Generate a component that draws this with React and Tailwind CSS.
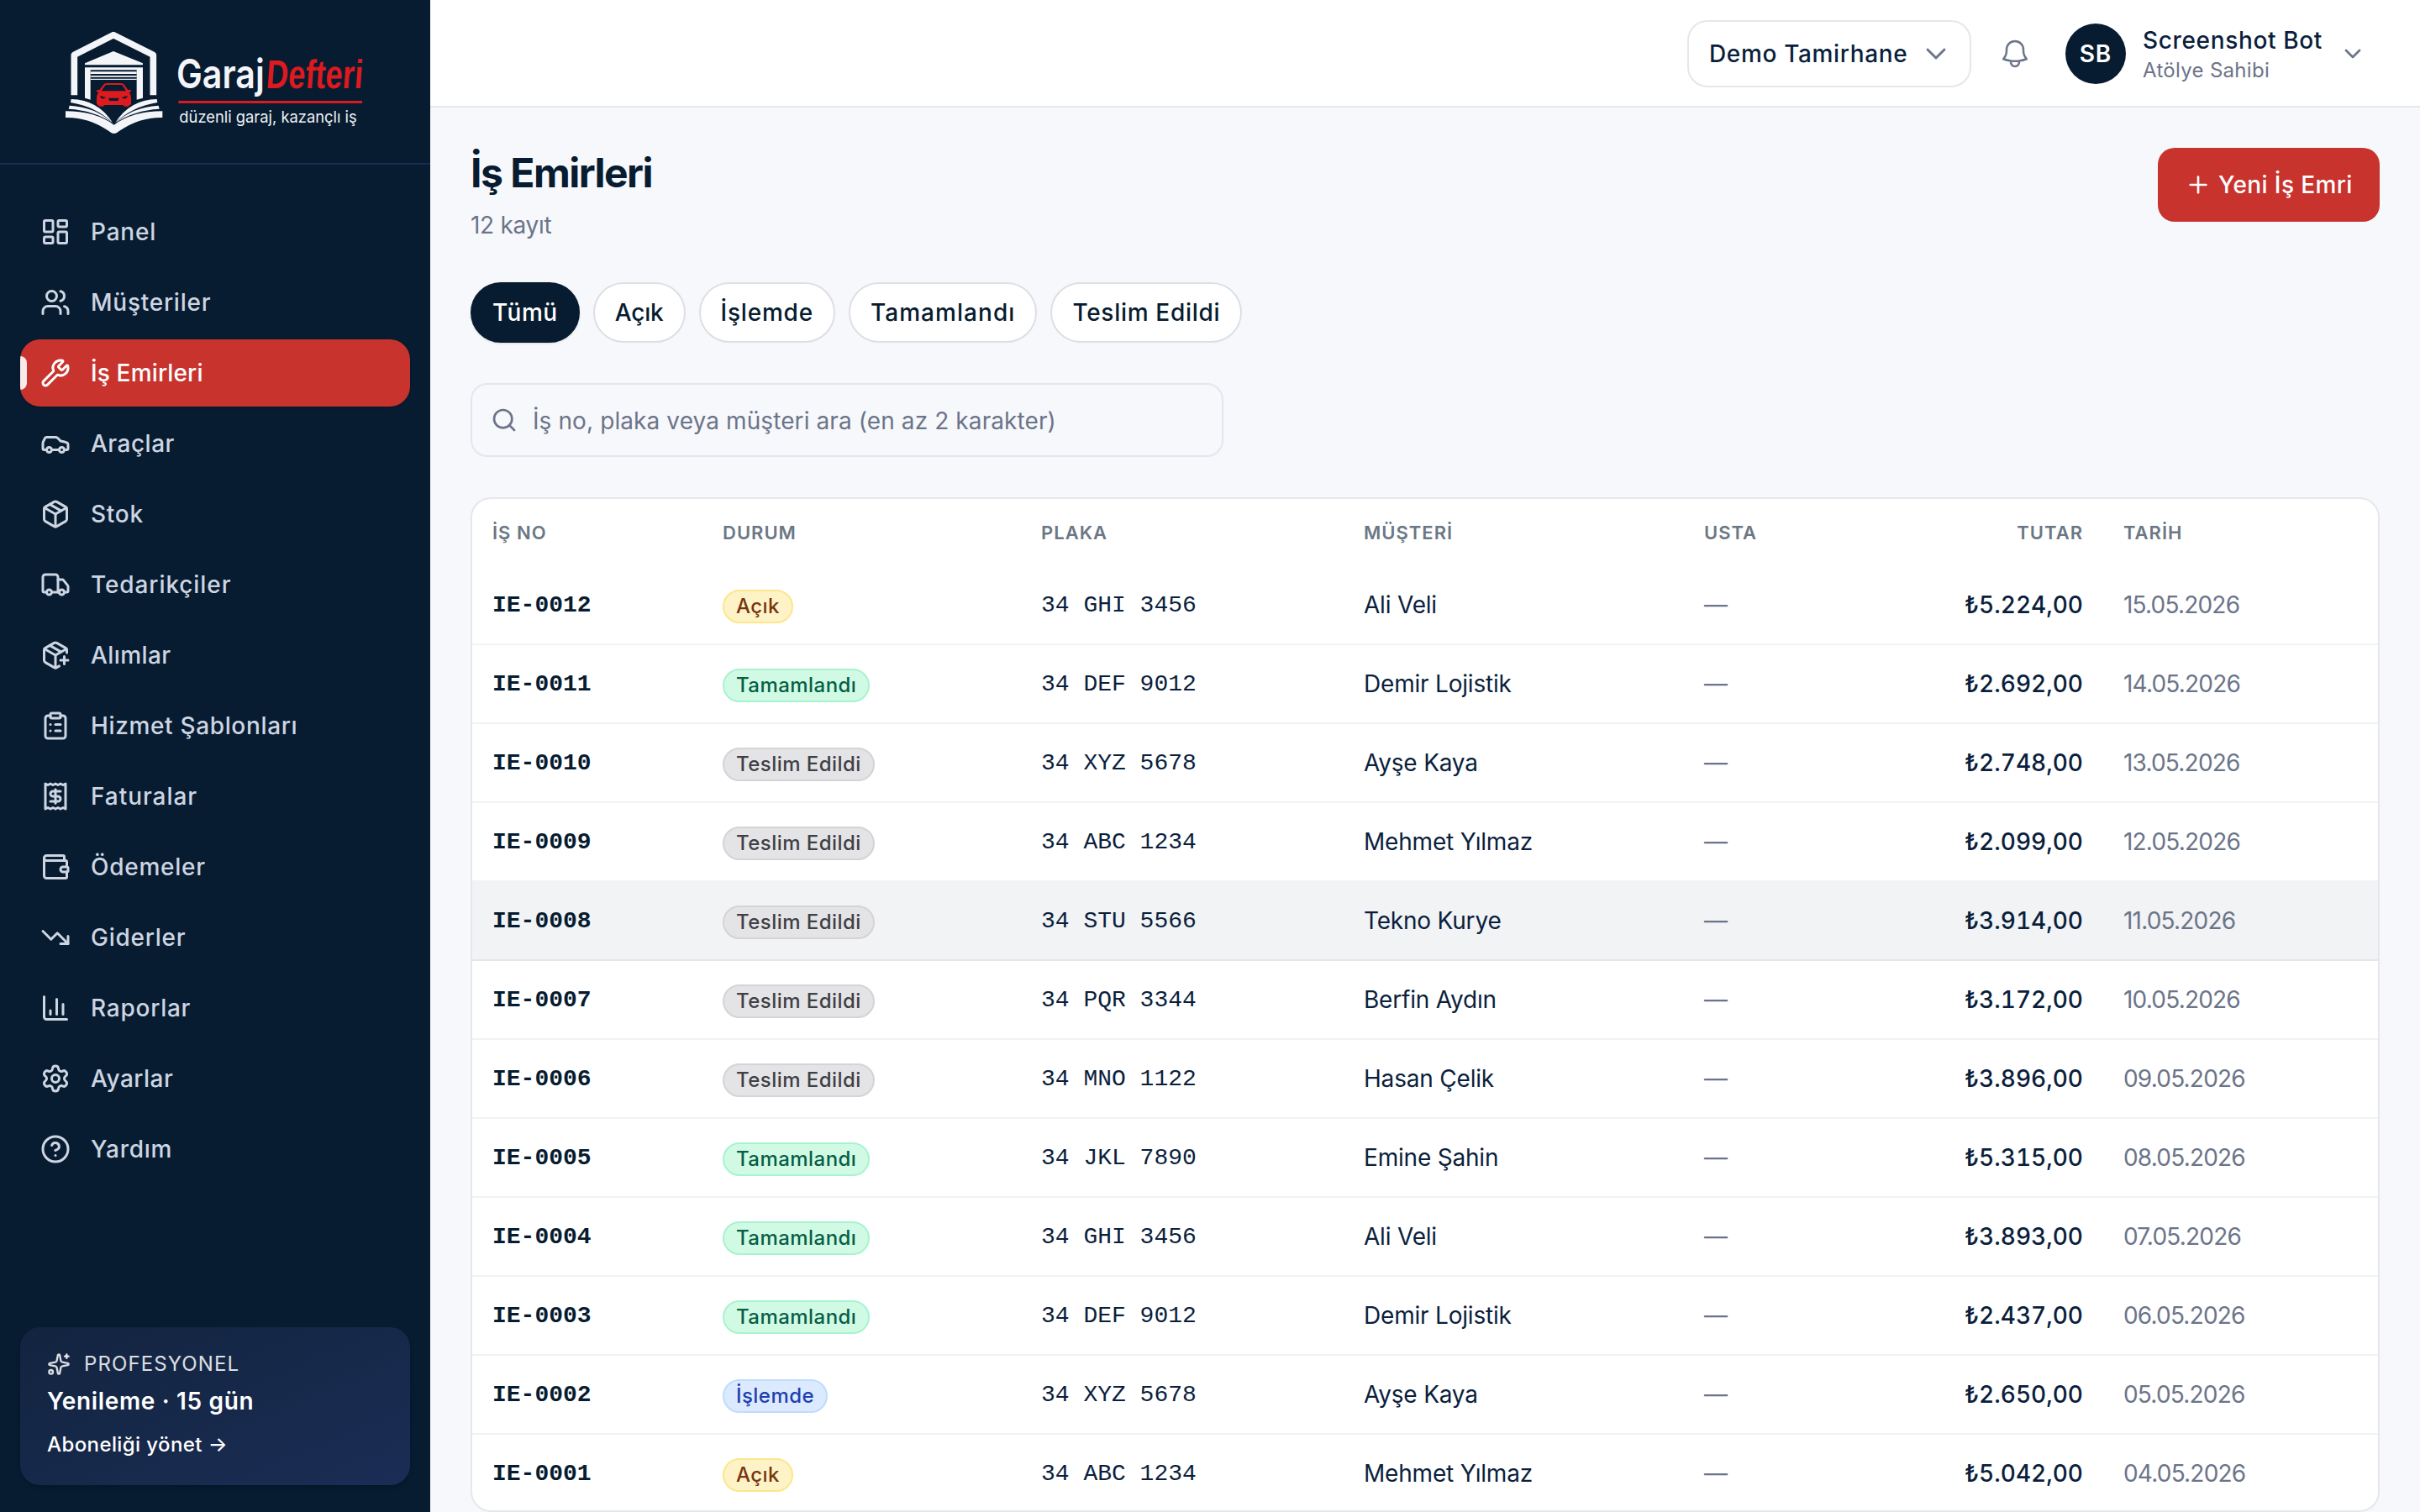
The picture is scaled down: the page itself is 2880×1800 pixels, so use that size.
import * as React from "react"
import {
  Car,
  ChartColumn,
  ChevronDown,
  CircleHelp,
  ClipboardList,
  LayoutDashboard,
  Package,
  PackagePlus,
  Plus,
  Receipt,
  Search,
  Settings,
  Sparkles,
  TrendingDown,
  Truck,
  Users,
  Wallet,
  Wrench,
} from "lucide-react"
import clsx from "clsx"

const NAV_ITEMS = [
  { label: "Panel", icon: LayoutDashboard, tracking: "tracking-[0.8px]" },
  { label: "Müşteriler", icon: Users, tracking: "tracking-[0.75px]" },
  { label: "İş Emirleri", icon: Wrench, active: true, tracking: "tracking-[0.15px]" },
  { label: "Araçlar", icon: Car, tracking: "tracking-[0.5px]" },
  { label: "Stok", icon: Package, tracking: "tracking-[0.75px]" },
  { label: "Tedarikçiler", icon: Truck, tracking: "tracking-[0.9px]" },
  { label: "Alımlar", icon: PackagePlus, tracking: "tracking-[0.4px]" },
  { label: "Hizmet Şablonları", icon: ClipboardList, tracking: "tracking-[0.65px]" },
  { label: "Faturalar", icon: Receipt, tracking: "tracking-[0.95px]" },
  { label: "Ödemeler", icon: Wallet, tracking: "tracking-[0.75px]" },
  { label: "Giderler", icon: TrendingDown, tracking: "tracking-[0.75px]" },
  { label: "Raporlar", icon: ChartColumn, tracking: "tracking-[0.75px]" },
  { label: "Ayarlar", icon: Settings, tracking: "tracking-[0.5px]" },
  { label: "Yardım", icon: CircleHelp, tracking: "tracking-[0.75px]" },
]

const FILTERS = [
  { label: "Tümü", active: true, tracking: "tracking-[0.6px]" },
  { label: "Açık", tracking: "tracking-[-0.2px]" },
  { label: "İşlemde", tracking: "tracking-[0.8px]" },
  { label: "Tamamlandı", tracking: "tracking-[1.05px]" },
  { label: "Teslim Edildi", tracking: "tracking-[0.7px]" },
]

const STATUS_STYLES = {
  "Açık": "bg-[#fef3c7] border-[#fde68a] text-[#78350f]",
  "Tamamlandı": "bg-[#d1fae5] border-[#a7f3d0] text-[#065f46]",
  "Teslim Edildi": "bg-[#e4e4e7] border-[#d4d4d8] text-[#3f3f46]",
  "İşlemde": "bg-[#dbeafe] border-[#bfdbfe] text-[#1e40af]",
}

const ORDERS = [
  { no: "IE-0012", status: "Açık", plate: "34 GHI 3456", customer: "Ali Veli", total: "₺5.224,00", date: "15.05.2026" },
  { no: "IE-0011", status: "Tamamlandı", plate: "34 DEF 9012", customer: "Demir Lojistik", total: "₺2.692,00", date: "14.05.2026" },
  { no: "IE-0010", status: "Teslim Edildi", plate: "34 XYZ 5678", customer: "Ayşe Kaya", total: "₺2.748,00", date: "13.05.2026" },
  { no: "IE-0009", status: "Teslim Edildi", plate: "34 ABC 1234", customer: "Mehmet Yılmaz", total: "₺2.099,00", date: "12.05.2026" },
  { no: "IE-0008", status: "Teslim Edildi", plate: "34 STU 5566", customer: "Tekno Kurye", total: "₺3.914,00", date: "11.05.2026", highlighted: true },
  { no: "IE-0007", status: "Teslim Edildi", plate: "34 PQR 3344", customer: "Berfin Aydın", total: "₺3.172,00", date: "10.05.2026" },
  { no: "IE-0006", status: "Teslim Edildi", plate: "34 MNO 1122", customer: "Hasan Çelik", total: "₺3.896,00", date: "09.05.2026" },
  { no: "IE-0005", status: "Tamamlandı", plate: "34 JKL 7890", customer: "Emine Şahin", total: "₺5.315,00", date: "08.05.2026" },
  { no: "IE-0004", status: "Tamamlandı", plate: "34 GHI 3456", customer: "Ali Veli", total: "₺3.893,00", date: "07.05.2026" },
  { no: "IE-0003", status: "Tamamlandı", plate: "34 DEF 9012", customer: "Demir Lojistik", total: "₺2.437,00", date: "06.05.2026" },
  { no: "IE-0002", status: "İşlemde", plate: "34 XYZ 5678", customer: "Ayşe Kaya", total: "₺2.650,00", date: "05.05.2026" },
  { no: "IE-0001", status: "Açık", plate: "34 ABC 1234", customer: "Mehmet Yılmaz", total: "₺5.042,00", date: "04.05.2026" },
]

function Logo() {
  return (
    <svg viewBox="168 51 1200 480" className="h-[160px] w-[400px] overflow-visible" aria-label="GarajDefteri">
      {/* garage */}
      <g fill="#f4f5f9">
        <path d="M265 340V196L405 125L547 196V340" fill="none" stroke="#f4f5f9" strokeWidth="23" strokeLinejoin="round" />
        <path d="M303 232V226L405 183L510 226V232Z" />
        <path d="M303 241H510V350L488 356V250H323V356L303 350Z" />
        <path d="M323 256H488V264H323ZM323 270H488V275H323ZM323 281H488V285H323Z" />
      </g>
      {/* car */}
      <g fill="#dc1a1f">
        <path
          fillRule="evenodd"
          d="M345 322L356 320L369 303Q372 297 380 297H432Q440 297 444 303L456 320L468 322L467 329L461 329Q468 338 468 350V370Q468 374 464 375L457 380H444L440 375H373L369 380H356L349 375Q345 372 345 368V350Q345 338 352 329L346 329ZM362 325H450L438 306Q436 303 431 303H381Q377 303 375 306Z"
        />
        <path d="M357 342L377 348Q374 353 366 352Q358 351 357 342ZM455 342L435 348Q438 353 446 352Q454 351 455 342ZM387 350H425L421 360H391Z" fill="#071c30" />
      </g>
      {/* open book */}
      <g fill="#f4f5f9">
        <path d="M234 397Q340 397 407 446Q474 397 580 397V420Q500 418 429 466L416 475Q407 479 398 475L385 466Q314 418 234 420Z" />
        <path d="M254 354Q350 356 402 438Q340 380 252 366Z" />
        <path d="M248 377Q340 382 400 438Q335 394 245 389Z" />
        <path d="M560 354Q464 356 412 438Q474 380 562 366Z" />
        <path d="M566 377Q474 382 414 438Q479 394 569 389Z" />
      </g>
      <text x="630" y="316" textLength="314" lengthAdjust="spacingAndGlyphs" fill="#f4f5f9" className="font-['Inter',sans-serif] text-[144px] font-semibold">
        Garaj
      </text>
      <text transform="translate(948 316) skewX(-4)" textLength="345" lengthAdjust="spacingAndGlyphs" fill="#dc1a1f" className="font-['Liberation_Sans',sans-serif] text-[144px] font-bold">
        Defteri
      </text>
      <path d="M637 360H1293V369H637Z" fill="#dc1a1f" />
      <text x="640" y="438" textLength="634" lengthAdjust="spacingAndGlyphs" fill="#eef1f6" className="font-['Inter',sans-serif] text-[57px]">
        düzenli garaj, kazançlı iş
      </text>
    </svg>
  )
}

function BellIcon({ className }) {
  return (
    <svg viewBox="0 0 24 24" fill="none" stroke="currentColor" strokeWidth="1.5" strokeLinecap="round" strokeLinejoin="round" className={className}>
      <path d="M14.857 17.082a23.848 23.848 0 0 0 5.454-1.31A8.967 8.967 0 0 1 18 9.75V9A6 6 0 0 0 6 9v.75a8.967 8.967 0 0 1-2.312 6.022c1.733.64 3.56 1.085 5.455 1.31m5.714 0a24.255 24.255 0 0 1-5.714 0m5.714 0a3 3 0 1 1-5.714 0" />
    </svg>
  )
}

function Sidebar() {
  return (
    <aside className="flex w-[512px] shrink-0 flex-col bg-[#071c30]">
      <div className="flex h-[196px] shrink-0 items-center justify-center border-b-2 border-[#1a2c52]">
        <Logo />
      </div>

      <nav className="flex flex-1 flex-col gap-1 px-6 py-10">
        {NAV_ITEMS.map(({ label, icon: Icon, active, tracking }) => (
          <a
            key={label}
            className={clsx(
              "relative flex h-20 items-center gap-6 overflow-hidden rounded-3xl px-6 text-[28px] font-medium",
              tracking,
              active ? "bg-[#c8332e] text-white shadow-sm" : "text-[#cdd5e2]"
            )}
          >
            {active && <span className="absolute left-0 h-10 w-2 rounded-r-lg bg-white/90" />}
            <Icon className="size-9 shrink-0" strokeWidth={2} />
            {label}
          </a>
        ))}
      </nav>

      <div className="mx-6 mb-8 h-[188px] rounded-3xl bg-linear-to-br from-[#12243f] to-[#1b2d55] px-8 pt-7 text-white shadow-md">
        <div className="flex h-8 items-center gap-4 text-2xl tracking-[1.1px] text-white/85">
          <Sparkles className="size-7" strokeWidth={2} />
          PROFESYONEL
        </div>
        <p className="mt-2 text-[28px] leading-10 font-semibold tracking-[0.65px]">Yenileme · 15 gün</p>
        <a className="mt-4 block text-2xl leading-8 font-medium tracking-[0.4px]">Aboneliği yönet →</a>
      </div>
    </aside>
  )
}

function Topbar() {
  return (
    <header className="flex h-32 shrink-0 items-center justify-end border-b-2 border-[#e4e7ec] bg-white pt-0.5 pr-16">
      <button className="flex h-20 w-[338px] items-center justify-between rounded-3xl border-2 border-[#e4e7ec] pr-5 pl-6 text-[28px] font-medium tracking-[0.65px] text-[#0b1f3d]">
        Demo Tamirhane
        <ChevronDown className="size-10 text-[#6b7489]" strokeWidth={1.75} />
      </button>
      <BellIcon className="ml-8 size-10 text-[#6b7489]" />
      <div className="ml-10 flex size-[72px] items-center justify-center rounded-full bg-[#071c30] text-[28px] font-semibold tracking-[1px] text-white">
        SB
      </div>
      <div className="ml-5 w-[214px] whitespace-nowrap">
        <p className="text-[28px] leading-10 font-medium tracking-[0.65px] text-[#0b1f3d]">Screenshot Bot</p>
        <p className="text-2xl leading-8 tracking-[0.3px] text-[#6b7489]">Atölye Sahibi</p>
      </div>
      <ChevronDown className="ml-5 size-8 text-[#6b7489]" strokeWidth={2} />
    </header>
  )
}

function StatusBadge({ status }) {
  return (
    <span
      className={clsx(
        "flex h-10 w-fit items-center rounded-full border-2 px-3.5 text-2xl font-medium tracking-[0.45px]",
        STATUS_STYLES[status]
      )}
    >
      {status}
    </span>
  )
}

function OrdersTable() {
  return (
    <div className="overflow-hidden rounded-3xl border-2 border-[#e5e7ea] bg-white">
      <table className="w-full table-fixed border-separate border-spacing-0 text-left text-[28px] text-[#0b1f3d]">
        <colgroup>
          <col className="w-[274px]" />
          <col className="w-[379px]" />
          <col className="w-[384px]" />
          <col className="w-[405px]" />
          <col className="w-[199px]" />
          <col className="w-[300px]" />
          <col />
        </colgroup>
        <thead>
          <tr className="h-20 text-[22px] tracking-[1px] text-[#6b7785] [&>th]:px-6 [&>th]:py-0 [&>th]:font-semibold">
            <th>İŞ NO</th>
            <th>DURUM</th>
            <th>PLAKA</th>
            <th>MÜŞTERİ</th>
            <th>USTA</th>
            <th className="text-right">TUTAR</th>
            <th>TARİH</th>
          </tr>
        </thead>
        <tbody>
          {ORDERS.map((order) => (
            <tr
              key={order.no}
              className={clsx(
                "h-[94px] last:h-[92px] [&>td]:border-b-2 [&>td]:px-6 last:[&>td]:border-b-0",
                order.highlighted ? "bg-[#f1f3f5] [&>td]:border-[#e3e5e8]" : "[&>td]:border-[#f1f2f4]"
              )}
            >
              <td className="pt-0.5 font-['Liberation_Mono',monospace] font-bold text-[#071c30]">{order.no}</td>
              <td className="pt-1">
                <StatusBadge status={order.status} />
              </td>
              <td className="pt-0.5 font-['Liberation_Mono',monospace]">{order.plate}</td>
              <td className="tracking-[-0.2px]">{order.customer}</td>
              <td className="text-[#6b7489]">—</td>
              <td className="text-right font-medium tabular-nums">{order.total}</td>
              <td className="tracking-[-0.8px] text-[#6b7489]">{order.date}</td>
            </tr>
          ))}
        </tbody>
      </table>
    </div>
  )
}

export default function App() {
  return (
    <div className="flex h-screen w-screen overflow-hidden bg-[#f7f8fc] font-['Inter',sans-serif] text-[#0b1f3d]">
      <Sidebar />
      <div className="flex min-w-0 flex-1 flex-col">
        <Topbar />
        <main className="flex flex-1 flex-col gap-12 overflow-hidden px-12 pt-12">
          <div className="flex items-start justify-between">
            <div>
              <h1 className="text-[48px] leading-[60px] font-bold tracking-[-1.5px] text-[#071c30]">İş Emirleri</h1>
              <p className="mt-3 text-[28px] leading-10 tracking-[-0.3px] text-[#6b7489]">12 kayıt</p>
            </div>
            <button className="flex h-[88px] w-[264px] items-center gap-2 rounded-[20px] bg-[#c8332e] pl-8 text-[28px] font-medium tracking-[0.4px] whitespace-nowrap text-white">
              <Plus className="size-8" strokeWidth={2} />
              Yeni İş Emri
            </button>
          </div>

          <div className="flex gap-4">
            {FILTERS.map(({ label, active, tracking }) => (
              <button
                key={label}
                className={clsx(
                  "h-[72px] rounded-full border-2 px-6 text-[28px] font-medium",
                  tracking,
                  active ? "border-[#071c30] bg-[#071c30] text-white shadow-sm" : "border-[#dcdfe4] bg-white text-[#071c30]"
                )}
              >
                {label}
              </button>
            ))}
          </div>

          <div className="flex h-[88px] w-[896px] shrink-0 items-center gap-[18px] rounded-[20px] border-2 border-[#e4e6ed] px-[22px] text-[28px] tracking-[0.1px] text-[#6b7489]">
            <Search className="size-8" strokeWidth={2} />
            <span className="pt-0.5">İş no, plaka veya müşteri ara (en az 2 karakter)</span>
          </div>

          <OrdersTable />
        </main>
      </div>
    </div>
  )
}
